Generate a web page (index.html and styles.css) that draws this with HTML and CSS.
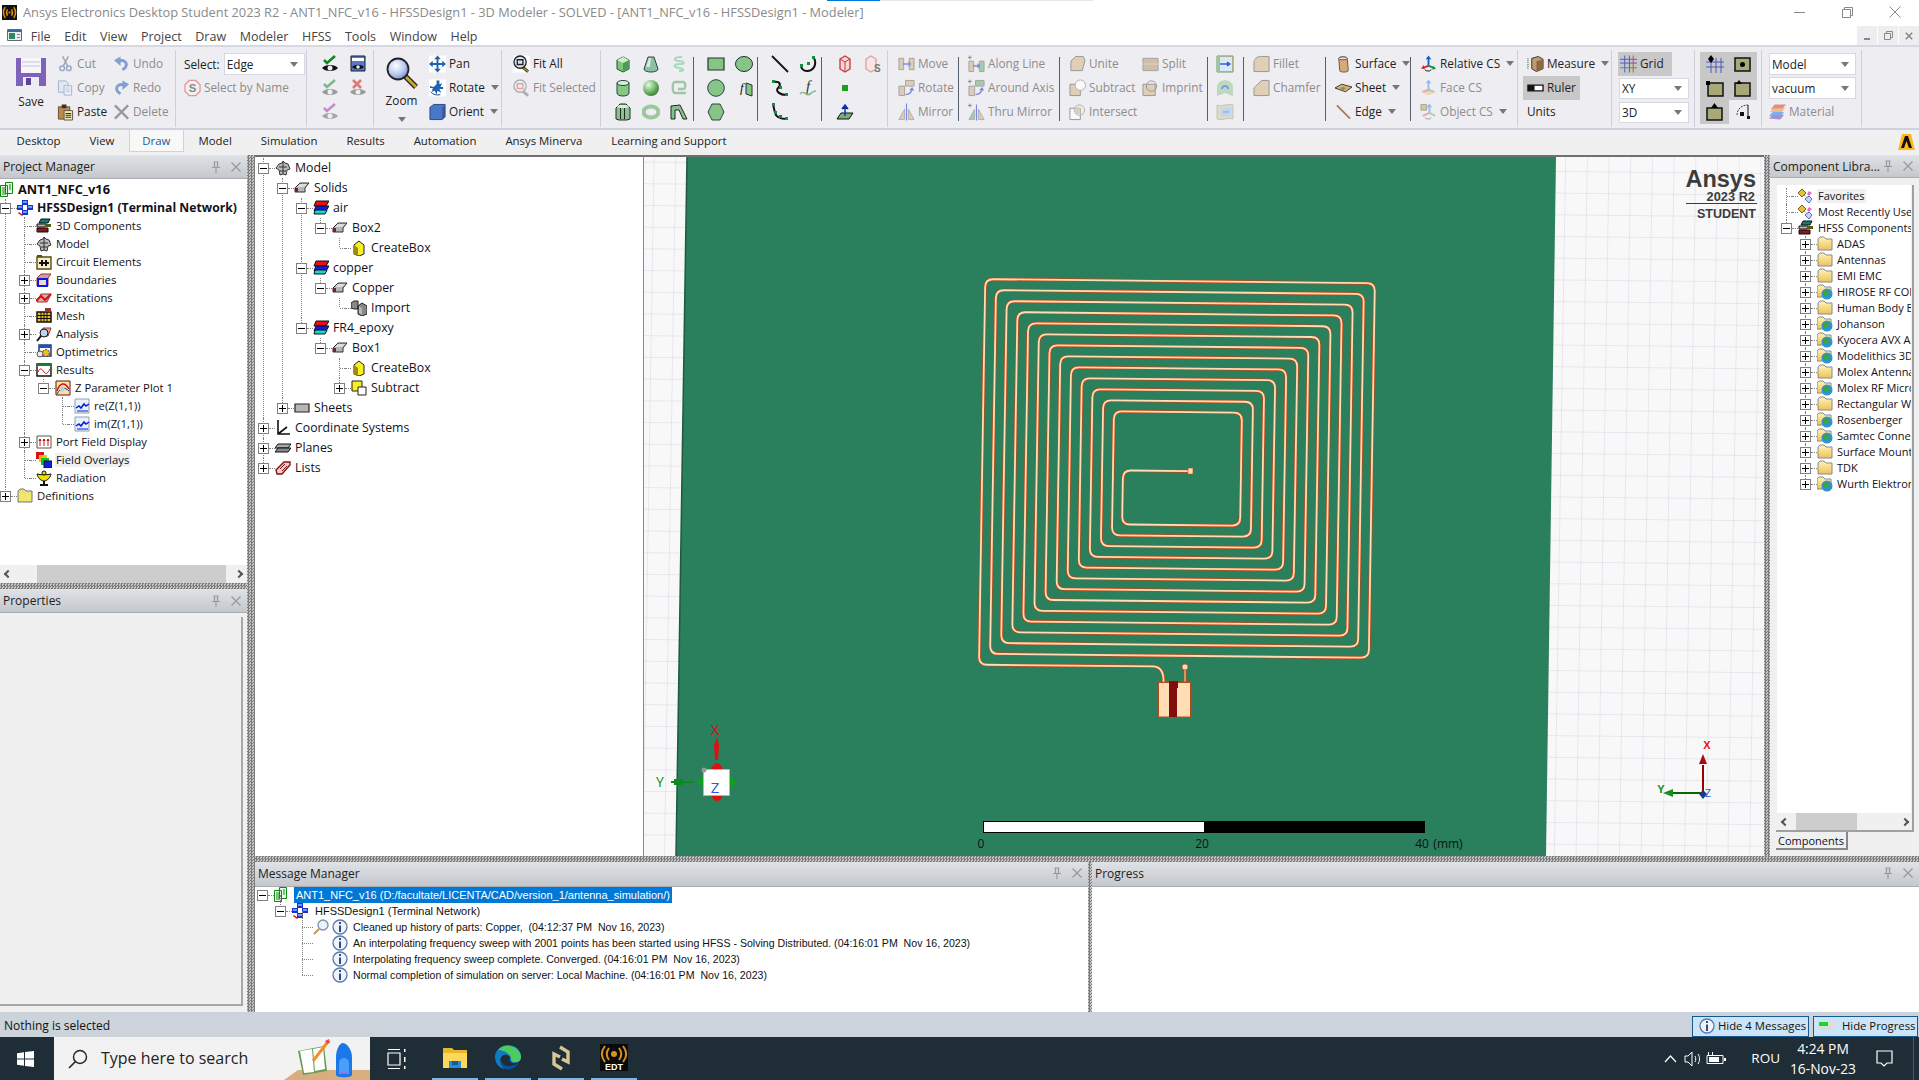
FILE: index.html
```html
<!DOCTYPE html>
<html lang="en">
<head>
<meta charset="utf-8">
<title>Ansys Electronics Desktop</title>
<link rel="stylesheet" href="styles.css">
</head>
<body>
<svg class="defs" width="0" height="0" aria-hidden="true">
<defs>
<radialGradient id="lens" cx=".4" cy=".35" r=".7"><stop offset="0" stop-color="#fff"/><stop offset=".6" stop-color="#b8c8ee"/><stop offset="1" stop-color="#6f86c8"/></radialGradient>
<radialGradient id="ball" cx=".35" cy=".3" r=".8"><stop offset="0" stop-color="#e8f6e4"/><stop offset=".5" stop-color="#7cc070"/><stop offset="1" stop-color="#2f6f2f"/></radialGradient>
<linearGradient id="fold" x1="0" y1="0" x2="0" y2="1"><stop offset="0" stop-color="#fff3b8"/><stop offset="1" stop-color="#eec25a"/></linearGradient>
<pattern id="grid" width="21.7" height="21.7" patternUnits="userSpaceOnUse" patternTransform="matrix(1 .0103 -.0162 1 4 3)"><path d="M21.7 0H0V21.7" fill="none" stroke="#d8d5e8" stroke-width="1"/></pattern>
<path id="coil" d="M7 1H-50q-8 0-8 8v38q0 8 8 8h102q8 0 8-8v-97q0-8-8-8h-112q-8 0-8 8v107.900q0 8 8 8h122.900q8 0 8-8v-118.800q0-8-8-8h-133.800q-8 0-8 8v129.700q0 8 8 8h144.700q8 0 8-8v-140.600q0-8-8-8h-155.600q-8 0-8 8v151.500q0 8 8 8h166.500q8 0 8-8v-162.400q0-8-8-8h-177.400q-8 0-8 8v173.300q0 8 8 8h188.300q8 0 8-8v-184.200q0-8-8-8h-199.200q-8 0-8 8v195.100q0 8 8 8h210.100q8 0 8-8v-206q0-8-8-8h-221q-8 0-8 8v216.900q0 8 8 8h231.900q8 0 8-8v-227.800q0-8-8-8h-242.800q-8 0-8 8v238.700q0 8 8 8h253.700q8 0 8-8v-249.600q0-8-8-8h-264.600q-8 0-8 8v260.500q0 8 8 8h275.500q8 0 8-8v-271.400q0-8-8-8h-286.400q-8 0-8 8v282.300q0 8 8 8h297.300q8 0 8-8v-293.200q0-8-8-8h-308.200q-8 0-8 8v304.100q0 8 8 8h319.100q8 0 8-8v-315q0-8-8-8h-330q-8 0-8 8v325.900q0 8 8 8h340.900q8 0 8-8v-336.800q0-8-8-8h-351.800q-8 0-8 8v347.700q0 8 8 8h362.700q8 0 8-8v-358.600q0-8-8-8h-373.600q-8 0-8 8v369.500q0 8 8 8h165.800q11 0 11 15.300"/>

<symbol id="save" viewBox="0 0 30 30"><path fill="#7f62ba" d="M0 1h30v28H0z"/><path fill="#f6f6fb" d="M5 1h20v15H5z"/><path stroke="#c4c4dc" d="M6 5h18M6 9h18"/><path fill="#ecedf2" d="M7 20h16v9H7z"/><path fill="#5c4494" d="M10 21h5v7h-5z"/></symbol>
<symbol id="cut" viewBox="0 0 18 18"><circle cx="5.5" cy="13.5" r="2.5" fill="none" stroke="#7d94bc" stroke-width="1.6"/><circle cx="12.5" cy="13.5" r="2.5" fill="none" stroke="#7d94bc" stroke-width="1.6"/><path stroke="#8e8e9c" stroke-width="1.6" d="M6.5 11.5 12 1M11.5 11.5 6 1"/></symbol>
<symbol id="copy" viewBox="0 0 18 18"><path fill="#dce6f4" stroke="#8aa0c4" d="M1.5 1.5h8l2 2v10h-10z"/><path fill="#f2f6fc" stroke="#8aa0c4" d="M7.5 6.5h8v10h-8z"/><path stroke="#a8b8d0" d="M9 9h5M9 11h5M9 13h5"/></symbol>
<symbol id="paste" viewBox="0 0 18 18"><path fill="#b88c4a" stroke="#6a4c20" d="M1.5 3.5h12v13h-12z"/><path fill="#f2e9a0" stroke="#555" d="M7.5 7.5h9v10h-9z"/><path fill="#333" d="M5 1h5v4H5zM9 10h6v1H9zM9 12h6v1H9zM9 14h6v1H9z"/></symbol>
<symbol id="undo" viewBox="0 0 18 18"><path fill="none" stroke="#5b86c6" stroke-width="3" d="M6 6c5-2 9 1 8 5-.5 2-2 3-4 4"/><path fill="#5b86c6" d="M8 1v10L1 5z"/></symbol>
<symbol id="redo" viewBox="0 0 18 18"><path fill="none" stroke="#5b86c6" stroke-width="3" d="M12 6c-5-2-9 1-8 5 .5 2 2 3 4 4"/><path fill="#5b86c6" d="M10 1v10l7-6z"/></symbol>
<symbol id="del" viewBox="0 0 18 18"><path stroke="#7c7c7c" stroke-width="2.4" d="M2 2l14 14M16 2 2 16"/></symbol>
<symbol id="sbn" viewBox="0 0 18 18"><path fill="#f3f3f3" stroke="#e27a7a" stroke-width="1.4" d="M5.5 1h7L17 5.5v7L12.500 17h-7L1 12.500v-7z"/><text x="9" y="13.500" text-anchor="middle" class="sv-b" font-size="12" fill="#666">S</text></symbol>
<symbol id="eye" viewBox="0 0 18 18"><path fill="#111" d="M1 13c3-4 13-4 16 0-3 4-13 4-16 0z"/><circle cx="9" cy="13" r="2.500" fill="#eee"/><path fill="none" stroke="#0a8a1e" stroke-width="2.600" d="M3 5l3 3 8-7"/></symbol>
<symbol id="eyew" viewBox="0 0 18 18"><path fill="#5b78c8" stroke="#123" d="M2 1h14v15H2z"/><path fill="#fff" d="M3 3h12v3H3z"/><path fill="#111" d="M3 12c3-3 9-3 12 0-3 3-9 3-12 0z"/><circle cx="9" cy="12" r="1.800" fill="#eee"/></symbol>
<symbol id="eyeg" viewBox="0 0 18 18"><path fill="#777" d="M1 13c3-4 13-4 16 0-3 4-13 4-16 0z"/><circle cx="9" cy="13" r="2.500" fill="#eee"/><path fill="none" stroke="#50a060" stroke-width="2.600" d="M3 5l3 3 8-7"/></symbol>
<symbol id="eyex" viewBox="0 0 18 18"><path fill="#777" d="M1 13c3-4 13-4 16 0-3 4-13 4-16 0z"/><circle cx="9" cy="13" r="2.500" fill="#eee"/><path stroke="#d84848" stroke-width="2.600" d="M4 1l8 8M12 1 4 9"/></symbol>
<symbol id="eyep" viewBox="0 0 18 18"><path fill="#888" d="M1 13c3-4 13-4 16 0-3 4-13 4-16 0z"/><circle cx="9" cy="13" r="2.500" fill="#eee"/><path fill="none" stroke="#b068b8" stroke-width="2.600" d="M3 5l3 3 8-7"/></symbol>
<symbol id="zoom" viewBox="0 0 32 32"><path stroke="#222" stroke-width="5.500" d="M19 19l11 11"/><path stroke="#c8a830" stroke-width="3" d="M20 20l10 10"/><circle cx="12" cy="12" r="10.500" fill="url(#lens)" stroke="#222" stroke-width="1.800"/></symbol>
<symbol id="pan" viewBox="0 0 18 18"><path fill="#fff" d="M0 0h18v18H0z"/><path fill="#1f62b0" d="M9 0l3.500 4H10v4h4V5.500L18 9l-4 3.500V10h-4v4h2.500L9 18l-3.500-4H8v-4H4v2.500L0 9l4-3.500V8h4V4H5.500z"/></symbol>
<symbol id="rot" viewBox="0 0 18 18"><path fill="#fff" d="M0 0h18v18H0z"/><path fill="#1f62b0" d="M8 1h3v4l3-1-2 4h3v2h-4l2 4-4-2-1 4-2-4-3 1 1-4H1V7l4 1 3-3z"/><path fill="none" stroke="#0c3d78" d="M2 13c2 3 6 4 10 3"/></symbol>
<symbol id="orient" viewBox="0 0 18 18"><path fill="#4a78c8" stroke="#26477e" d="M1 4l4-3h12v13l-3 3H1z"/><path fill="#345a9c" d="M14 4h3V2l-3 2v13l3-3V4z"/></symbol>
<symbol id="fit" viewBox="0 0 18 18"><path fill="#fff" d="M0 0h18v18H0z"/><path stroke="#222" stroke-width="3" d="M10 12l6 5"/><path stroke="#b89a30" stroke-width="1.500" d="M11 13l5 4"/><circle cx="7.500" cy="7" r="6.500" fill="#dde4f6" stroke="#222" stroke-width="1.400"/><path fill="none" stroke="#222" stroke-width="1.400" d="M4.500 4.500h6v5h-6z"/></symbol>
<symbol id="fits" viewBox="0 0 18 18"><path stroke="#999" stroke-width="3" d="M10 12l6 5"/><circle cx="7.500" cy="7" r="6.500" fill="#eee" stroke="#999" stroke-width="1.400"/><path fill="none" stroke="#e08a8a" stroke-width="1.400" d="M4.500 4.500h6v5h-6z"/></symbol>

<symbol id="box" viewBox="0 0 18 18"><path fill="#7cc67c" stroke="#1f4d2a" d="M3 5l6-3 6 3v9l-6 3-6-3z"/><path fill="#4f9a58" d="M9 8l6-3v9l-6 3z"/><path fill="#cfeeca" d="M3 5l6-3 6 3-6 3z"/></symbol>
<symbol id="cone" viewBox="0 0 18 18"><path fill="#8cc0a0" stroke="#344" d="M6 2h6l4 12c0 4-14 4-14 0z"/><path fill="#d8e8e0" d="M7 3h2L8 12H4z"/></symbol>
<symbol id="helix" viewBox="0 0 18 18"><path fill="none" stroke="#a6d8bc" stroke-width="2" d="M12 2C2 2 4 6 9 6s7 3 1 3-8 3-1 4 4 3 0 3"/></symbol>
<symbol id="cyl" viewBox="0 0 18 18"><path fill="#88c688" stroke="#244" d="M3 4v10c0 4 12 4 12 0V4z"/><ellipse cx="9" cy="4" rx="6" ry="2.500" fill="#d6f0d2" stroke="#244"/></symbol>
<symbol id="sphere" viewBox="0 0 18 18"><circle cx="9" cy="9" r="8" fill="url(#ball)"/></symbol>
<symbol id="spir" viewBox="0 0 18 18"><path fill="none" stroke="#9cc8a4" stroke-width="2.400" d="M16 14H5C2 14 2 3 5 3h8c3 0 3 7 0 7H8"/></symbol>
<symbol id="prism" viewBox="0 0 18 18"><path fill="#8cc090" stroke="#1e2a22" d="M6 1h6l4 4v11l-3 1H5l-3-1V5z"/><path fill="#1e2a22" d="M6 5v11h1V5zM10 5v11h1V5z"/><path fill="#d8eed8" d="M5 2h8l2 2-3 1H6L3 4z"/></symbol>
<symbol id="torus" viewBox="0 0 18 18"><ellipse cx="9" cy="9" rx="7.500" ry="5.500" fill="none" stroke="#9cc89c" stroke-width="4"/></symbol>
<symbol id="bond" viewBox="0 0 18 18"><path fill="#8cc090" stroke="#1e2a22" d="M1 16V3l9-1 7 14h-4L9 7H5v9z"/></symbol>
<symbol id="rect" viewBox="0 0 18 18"><path fill="#87c587" stroke="#233" stroke-width="1.200" d="M1 3h16v12H1z"/></symbol>
<symbol id="ell" viewBox="0 0 18 18"><ellipse cx="9" cy="9" rx="8.500" ry="7.500" fill="#87c587" stroke="#233" stroke-width="1"/></symbol>
<symbol id="circ" viewBox="0 0 18 18"><circle cx="9" cy="9" r="8.300" fill="#87c587" stroke="#244" stroke-width="1"/></symbol>
<symbol id="fsurf" viewBox="0 0 18 18"><path fill="#87c587" stroke="#233" d="M11 4l6 2v11l-6-2z"/><text x="5" y="13" class="sv-i" font-size="13" fill="#111">f</text></symbol>
<symbol id="hex" viewBox="0 0 18 18"><path fill="#87c587" stroke="#344" d="M5 1h8l4 8-4 8H5L1 9z"/></symbol>
<symbol id="line" viewBox="0 0 18 18"><path stroke="#111" stroke-width="1.800" d="M1 1l16 16"/></symbol>
<symbol id="arc" viewBox="0 0 18 18"><path fill="none" stroke="#111" stroke-width="2" d="M15 3c3 6 0 13-7 13-4 0-6-3-6-6"/><path fill="#1a8a40" d="M13 1h3v3h-3zM1 9h3v3H1zM8 7h3v3H8z"/></symbol>
<symbol id="spl" viewBox="0 0 18 18"><path fill="none" stroke="#111" stroke-width="2" d="M2 3c8-1 8 3 5 6s2 7 8 7"/><path fill="#1a8a40" d="M1 1h3v3H1zM14 14h3v3h-3zM8 7h3v3H8z"/></symbol>
<symbol id="fcurve" viewBox="0 0 18 18"><text x="7" y="12" class="sv-i" font-size="15" fill="#333">f</text><path fill="none" stroke="#86b48e" stroke-width="1.600" d="M1 15c4-5 6 3 10 0s4-3 6-3"/></symbol>
<symbol id="poly" viewBox="0 0 18 18"><path fill="none" stroke="#111" stroke-width="2" d="M2 1l2 9c1 4 5 6 12 6"/><path fill="#1a8a40" d="M1 0h3v3H1zM3 8h3v3H3zM8 12h3v3H8zM14 14h3v3h-3z"/></symbol>
<symbol id="wbox" viewBox="0 0 18 18"><path fill="#f4d8d8" stroke="#c83838" stroke-width="1.300" d="M4 4l5-3 5 3v10l-5 3-5-3z"/><path fill="none" stroke="#c83838" d="M4 4l5 3 5-3M9 7v10"/></symbol>
<symbol id="wboxs" viewBox="0 0 18 18"><path fill="#f8e6e6" stroke="#dca0a0" stroke-width="1.300" d="M2 4l5-3 5 3v10l-5 3-5-3z"/><text x="10" y="17" class="sv-b" font-size="10" fill="#777">S</text></symbol>
<symbol id="point" viewBox="0 0 18 18"><path fill="#1aa01e" d="M6 6h6v6H6z"/></symbol>
<symbol id="plane" viewBox="0 0 18 18"><path fill="#78b078" stroke="#111" d="M1 16l4-6h12l-4 6z"/><path stroke="#1030d0" stroke-width="1.500" d="M9 13V3M6 6l3-4 3 4"/></symbol>
<symbol id="move" viewBox="0 0 18 18"><path fill="#d8c0a0" stroke="#888" d="M1 3h5v12H1zM12 3h5v12h-5z"/><path stroke="#5068e0" stroke-width="1.500" d="M5 9h6"/><path fill="#5068e0" d="M11 6l3 3-3 3z"/></symbol>
<symbol id="rotm" viewBox="0 0 18 18"><path fill="#d8c0a0" stroke="#888" d="M1 7h6v10H1zM8 1h9v6H8z"/><path fill="none" stroke="#5068e0" stroke-width="1.500" d="M8 16c4 0 6-2 7-6"/><path fill="#5068e0" d="M12 11l3-3 2 4z"/></symbol>
<symbol id="mirror" viewBox="0 0 18 18"><path fill="#d8c0a0" stroke="#999" d="M1 17l6-11v11zM17 17l-6-11v11z"/><path stroke="#5068e0" stroke-width="1.200" d="M9 0v18"/></symbol>
<symbol id="along" viewBox="0 0 18 18"><path stroke="#666" d="M2 0v4M0 2h4"/><path fill="#d8c0a0" stroke="#888" d="M1 6h5v11H1z"/><path fill="#8cc090" stroke="#888" d="M12 6h5v11h-5z"/><path stroke="#5068e0" stroke-width="1.500" d="M5 11h6"/><path fill="#5068e0" d="M10 8l3 3-3 3z"/></symbol>
<symbol id="around" viewBox="0 0 18 18"><path stroke="#666" d="M2 0v4M0 2h4"/><path fill="#d8c0a0" stroke="#888" d="M1 7h6v10H1z"/><path fill="#8cc090" stroke="#888" d="M8 1h9v6H8z"/><path fill="none" stroke="#5068e0" stroke-width="1.500" d="M8 16c4 0 6-2 7-6"/><path fill="#5068e0" d="M12 11l3-3 2 4z"/></symbol>
<symbol id="thru" viewBox="0 0 18 18"><path stroke="#666" d="M2 0v4M0 2h4"/><path fill="#8cc090" stroke="#999" d="M1 17l6-11v11z"/><path fill="#d8c0a0" stroke="#999" d="M17 17l-6-11v11z"/><path stroke="#5068e0" stroke-width="1.200" d="M9 1v17"/></symbol>
<symbol id="unite" viewBox="0 0 18 18"><path fill="#dcc4a4" stroke="#777" d="M2 6l5-5h8l2 4-3 11H2z"/></symbol>
<symbol id="subt" viewBox="0 0 18 18"><path fill="#dcc4a4" stroke="#777" d="M1 5h11v12H1z"/><circle cx="12" cy="6" r="5.500" fill="#fff" stroke="#999"/></symbol>
<symbol id="inter" viewBox="0 0 18 18"><path fill="#fff" stroke="#777" d="M1 5h11v12H1z"/><circle cx="11" cy="7" r="5.500" fill="none" stroke="#999"/><path fill="#dcc4a4" d="M6 5h6v6H7z"/></symbol>
<symbol id="split" viewBox="0 0 18 18"><path fill="#c8ae90" stroke="#888" d="M1 3h16v13H1z"/><path stroke="#eee" stroke-dasharray="1 1" d="M0 9h18"/></symbol>
<symbol id="impr" viewBox="0 0 18 18"><path fill="#dcc4a4" stroke="#777" d="M1 5h13v12H1z"/><circle cx="10" cy="7" r="5.500" fill="none" stroke="#777"/></symbol>
<symbol id="wrap" viewBox="0 0 18 18"><path fill="#eec8a0" stroke="#6a9a6a" d="M1 1h16v16H1z"/><path fill="#d8e8f8" d="M2 2h14v14H2z"/><path stroke="#3a60d8" stroke-width="1.400" d="M4 9h9M11 7l3 2-3 2"/><path fill="#98c898" d="M1 1h3v16H1z"/></symbol>
<symbol id="wrap2" viewBox="0 0 18 18"><path fill="#a8d0a8" d="M1 8c0-9 16-9 16 0v9l-8-3-8 3z"/><path fill="none" stroke="#3a60d8" stroke-width="1.400" d="M6 10c0-4 6-4 6 0"/></symbol>
<symbol id="wrap3" viewBox="0 0 18 18"><path fill="#dcd0b8" stroke="#a0c0a0" d="M1 2c5 2 11-2 16 0v14c-5-2-11 2-16 0z"/><path fill="#a8d0f0" d="M5 5h10v8H5z"/><path stroke="#6078d8" d="M7 9h6"/></symbol>
<symbol id="fillet" viewBox="0 0 18 18"><path fill="#dcc4a4" stroke="#777" d="M1 17V8c0-4 3-7 7-7h9v16z"/></symbol>
<symbol id="chamf" viewBox="0 0 18 18"><path fill="#dcc4a4" stroke="#777" d="M1 17V9l8-8h8v16z"/></symbol>
<symbol id="surf" viewBox="0 0 18 18"><path fill="#d8a878" stroke="#555" d="M4 3c0-2 9-2 9 0l1 13c0 2-9 2-9 0z"/><ellipse cx="8.500" cy="3" rx="4.500" ry="1.600" fill="#f0dcc4" stroke="#555"/></symbol>
<symbol id="sheet" viewBox="0 0 18 18"><path fill="#d8b870" stroke="#333" d="M0 9l7-4 11 3-7 5z"/><path fill="#998050" d="M5 9l3-1 4 1-3 2z"/></symbol>
<symbol id="edge" viewBox="0 0 18 18"><path stroke="#a87a50" stroke-width="1.800" d="M2 2l14 14"/></symbol>
<symbol id="cs" viewBox="0 0 18 18"><path stroke="#1060d0" stroke-width="2" d="M9 11V2"/><path fill="#1060d0" d="M9 0l3 4H6z"/><path stroke="#e02020" stroke-width="2" d="M9 11l-6 2"/><path fill="#e02020" d="M1 14l3-4 1 4z"/><path stroke="#109030" stroke-width="2" d="M9 11l6 2"/><path fill="#109030" d="M17 14l-4 1 1-4z"/><path fill="none" stroke="#111" d="M5 15c2 2 5 2 7 0"/></symbol>
<symbol id="fcs" viewBox="0 0 18 18"><path fill="#f0d0b0" d="M1 13l8-4 8 4-8 4z"/><path stroke="#80a8e8" stroke-width="2" d="M9 11V2"/><path fill="#80a8e8" d="M9 0l3 4H6z"/><path stroke="#e89090" stroke-width="2" d="M9 11l-6 2"/><path stroke="#90c898" stroke-width="2" d="M9 11l6 2"/></symbol>
<symbol id="ocs" viewBox="0 0 18 18"><path fill="#c8c070" stroke="#888" d="M1 1h6v6H1z"/><path stroke="#80a8e8" stroke-width="2" d="M10 10V2"/><path fill="#80a8e8" d="M10 0l3 4H7z"/><path stroke="#e89090" stroke-width="2" d="M10 10l-7 3"/><path stroke="#90c898" stroke-width="2" d="M10 10l6 3"/><path fill="none" stroke="#888" d="M5 15c2 2 5 2 7 0"/></symbol>
<symbol id="meas" viewBox="0 0 18 18"><path fill="#c09a70" stroke="#333" d="M5 3l7-2 5 3v10l-7 3-5-3z"/><path fill="#8a6840" d="M10 6l7-2v10l-7 3z"/><path stroke="#333" stroke-dasharray="1 1" d="M1 3v11"/></symbol>
<symbol id="ruler" viewBox="0 0 18 18"><path fill="#fff" stroke="#111" stroke-width="1.400" d="M1 6h16v6H1z"/><path fill="#111" d="M1 6h7v6H1z"/></symbol>
<symbol id="gridi" viewBox="0 0 18 18"><path stroke="#4a58c0" d="M0 4h18M0 8h18M5 0v18M10 0v18"/><path stroke="#e04040" d="M14 0v18"/><path stroke="#30a040" d="M0 13h18"/></symbol>
<symbol id="s1" viewBox="0 0 18 18"><path stroke="#4a58c0" d="M0 7h18M0 12h18M5 3v15M10 3v15M15 3v15"/><path fill="#000" d="M2 4l3-4 3 4-3 4z"/></symbol>
<symbol id="s2" viewBox="0 0 18 18"><path fill="#a8a878" stroke="#111" stroke-width="1.500" d="M1 3h15v13H1z"/><circle cx="8.500" cy="9.500" r="2.500" fill="#000"/></symbol>
<symbol id="s3" viewBox="0 0 18 18"><path fill="#a8a878" stroke="#111" stroke-width="1.500" d="M2 4h15v13H2z"/><path fill="#000" d="M0 2h4v4H0z"/></symbol>
<symbol id="s4" viewBox="0 0 18 18"><path fill="#a8a878" stroke="#111" stroke-width="1.500" d="M1 4h15v13H1z"/><path fill="#000" d="M2 5l3-4 3 4z"/></symbol>
<symbol id="s5" viewBox="0 0 18 18"><path fill="#a8a878" stroke="#111" stroke-width="1.500" d="M1 5h15v12H1z"/><path fill="#000" d="M5 5l3.500-5L12 5z"/></symbol>
<symbol id="s6" viewBox="0 0 18 18"><path fill="none" stroke="#445" stroke-dasharray="2 1" d="M3 12C3 6 8 2 14 2"/><path fill="#111" d="M6 9h4v4H6zM13 13h3v3h-3z"/><path fill="none" stroke="#111" d="M14 2v11"/></symbol>
<symbol id="matl" viewBox="0 0 18 18"><path fill="#e86860" d="M2 6l4-5h12l-4 5z"/><path fill="#e8b060" d="M1 9l4-4h12l-4 5z"/><path fill="#50a0e8" d="M0 13l4-4h12l-4 5z"/><path fill="#9070d0" d="M0 16l4-4h12l-4 5z"/></symbol>

<symbol id="t-proj" viewBox="0 0 16 16"><path fill="#e8f8e8" stroke="#0c8a0c" d="M5.500.5h7v11h-7zM.5 3.500h7v11h-7z"/><path stroke="#0c8a0c" d="M2 6h4M2 8h4M2 10h4M2 12h4M9 3h2M9 5h2M9 7h2"/></symbol>
<symbol id="t-hfss" viewBox="0 0 16 16"><path fill="#2030d0" d="M5 0h6v5H5zM0 5h6v5H0zM10 5h6v5h-6zM5 10h6v5H5z"/><path fill="#60a0ff" d="M6 1h4v2H6zM1 6h4v2H1zM11 6h4v2h-4zM6 11h4v2H6z"/><path fill="#d01010" d="M2 12l4 3-1 1-4-3z"/></symbol>
<symbol id="t-3d" viewBox="0 0 16 16"><path fill="#187878" stroke="#111" d="M5 1h9l-2 4H3z"/><path fill="#b8b8b8" stroke="#111" d="M1 6h9l-1 3h-8z"/><path fill="#8a1818" stroke="#111" d="M1 10h11v4H1z"/><path fill="#585818" d="M9 6h6v3H9z"/></symbol>
<symbol id="t-model" viewBox="0 0 16 16"><path fill="#bbb" stroke="#333" d="M4 4l3-1 1-2 2 2 3 1 2 5-3 1-1 5-3-1-3 1-1-5-3-2z"/><path stroke="#333" d="M8 2v12M4 7h8M5 11h6"/></symbol>
<symbol id="t-circ" viewBox="0 0 16 16"><path fill="#f4eec8" stroke="#5a4a10" stroke-width="1.400" d="M1 3h14v12H1z"/><path fill="#5a4a10" d="M1 1h5v2H1z"/><path stroke="#111" stroke-width="2" d="M6 6v6M10 6v6M3 9h10"/></symbol>
<symbol id="t-bnd" viewBox="0 0 16 16"><path fill="#c8a0a0" stroke="#933" d="M1 6l4-4h10l-3 4v8H1z"/><path fill="#f0d8d8" stroke="#1018e0" stroke-width="2" d="M2 7h9v7H2z"/></symbol>
<symbol id="t-exc" viewBox="0 0 16 16"><path fill="#d8b0b0" stroke="#933" d="M1 12l4-8h10l-4 8z"/><path fill="none" stroke="#e01010" stroke-width="2.200" d="M0 11l5-5 4 4 6-6"/></symbol>
<symbol id="t-mesh" viewBox="0 0 16 16"><path fill="#e8c020" stroke="#111" stroke-width="1.500" d="M1 4h14v10H1z"/><path stroke="#111" d="M1 7.500h14M1 10.500h14M5 4v10M8 4v10M11 4v10"/><path fill="#933" d="M9 0h6v4H9z"/></symbol>
<symbol id="t-ana" viewBox="0 0 16 16"><path fill="#d8b0b0" stroke="#933" d="M4 10l3-8h8l-3 8z"/><path stroke="#111" stroke-width="2" d="M5 10l-4 5"/><circle cx="8" cy="7" r="4" fill="#b8d8f0" stroke="#111"/></symbol>
<symbol id="t-opt" viewBox="0 0 16 16"><path fill="#fff" stroke="#203878" stroke-width="1.500" d="M3 1h12v11H3z"/><path fill="#2050c0" d="M3 1h12v3H3z"/><circle cx="10" cy="9" r="3.500" fill="#e8c020" stroke="#333" stroke-dasharray="2 1"/><circle cx="4" cy="10" r="3" fill="#e8e8e8" stroke="#555"/></symbol>
<symbol id="t-res" viewBox="0 0 16 16"><path fill="#fff" stroke="#111" stroke-width="1.400" d="M1 2h14v12H1z"/><path fill="#168038" d="M1 2h14v2H1z"/><path fill="none" stroke="#d81010" d="M2 10c2-5 4-3 6 0s4 1 6-3"/></symbol>
<symbol id="t-plot" viewBox="0 0 16 16"><path fill="#f4e4a0" stroke="#6a1010" d="M1 1h14v14H1z"/><path fill="none" stroke="#d81010" stroke-width="1.400" d="M2 11C5 2 10 2 14 9"/><path fill="none" stroke="#1030c8" d="M2 14c4-7 8-7 12-3"/><circle cx="7" cy="9" r="2.500" fill="#bcd"/></symbol>
<symbol id="t-trace" viewBox="0 0 16 16"><path fill="#e8f0f8" stroke="#8ca0b8" d="M1 1h14v14H1z"/><path fill="none" stroke="#0018e8" stroke-width="1.500" d="M2 10l3-2 2 2 3-4 2 2 3-2"/><path stroke="#0018e8" d="M3 13h11"/></symbol>
<symbol id="t-port" viewBox="0 0 16 16"><path fill="#fff" stroke="#555" d="M1 2h14v12H1z"/><path stroke="#d01010" d="M4 12V5M8 12V5M12 12V5M3 7l1-2 1 2M7 7l1-2 1 2M11 7l1-2 1 2"/></symbol>
<symbol id="t-over" viewBox="0 0 16 16"><path fill="#e01010" d="M0 0h8v7H0z"/><path fill="#f0c010" d="M3 3h8v7H3z"/><path fill="#10c030" d="M5 6h8v7H5z"/><path fill="#1020e0" stroke="#111" d="M8 9h8v7H8z"/></symbol>
<symbol id="t-rad" viewBox="0 0 16 16"><path fill="#f0e000" stroke="#111" d="M1 4c3 1 11 1 14 0-1 5-5 7-7 7s-6-2-7-7z"/><circle cx="8" cy="3" r="2" fill="#f0e000" stroke="#111"/><path fill="#111" d="M7 11h2v3H7zM4 14h8v2H4z"/></symbol>
<symbol id="t-fold" viewBox="0 0 16 16"><path fill="#e8e080" stroke="#777" d="M1 3l2-2h4l2 2h6v11H1z"/><path fill="#f0e868" d="M2 5h12v8H2z"/></symbol>
<symbol id="t-solid" viewBox="0 0 16 16"><path fill="#b8b4b4" stroke="#333" d="M1 8l5-5h9l-4 5v4H1z"/><path fill="#7a2020" d="M1 8h3v4H1z"/><path fill="#ddd" d="M6 4h7l-3 3H3z"/></symbol>
<symbol id="t-mat" viewBox="0 0 16 16"><path fill="#e81010" stroke="#111" d="M3 1h13l-3 5H1z"/><path fill="#1818e8" stroke="#111" d="M3 6h13l-3 5H1z"/><path fill="#10d8d8" stroke="#111" d="M2 10h12l-2 4H1z"/></symbol>
<symbol id="t-cbox" viewBox="0 0 16 16"><path fill="#f8f020" stroke="#222" d="M3 5l5-4 5 4v9l-5 2-5-2z"/><path fill="#a08a10" d="M3 5v9l4 2V8z"/></symbol>
<symbol id="t-imp" viewBox="0 0 16 16"><path fill="#888" stroke="#222" d="M0 3l3-2h4v8H3l-3-1zM7 6l4-3 5 3v8l-5 2-4-2z"/><path fill="#b8b8b8" d="M8 6l3 2v7l-3-2z"/></symbol>
<symbol id="t-sub" viewBox="0 0 16 16"><path fill="#f8f020" stroke="#222" d="M1 1h10v10H1z"/><path fill="#fff" stroke="#222" d="M7 7h8v8H7z"/></symbol>
<symbol id="t-sheet" viewBox="0 0 16 16"><path fill="#b8b4b4" stroke="#222" stroke-width="1.200" d="M1 4h14v8H1z"/></symbol>
<symbol id="t-cs" viewBox="0 0 16 16"><path fill="none" stroke="#111" stroke-width="1.600" d="M3 0v14h12M3 14l9-7"/></symbol>
<symbol id="t-planes" viewBox="0 0 16 16"><path fill="#aaa" stroke="#111" d="M3 4h13l-3 4H0z"/><path fill="#888" stroke="#111" d="M3 8h13l-3 4H0z"/></symbol>
<symbol id="t-lists" viewBox="0 0 16 16"><path fill="#e8d0d0" stroke="#8a1010" stroke-width="1.400" d="M1 10l8-8h6v3l-8 9H2z"/><path stroke="#8a1010" d="M5 9l5-5M7 11l5-5"/></symbol>
<symbol id="t-fav" viewBox="0 0 16 16"><path fill="#e8c040" stroke="#806010" d="M0 5l4-4 4 4-4 4z"/><path stroke="#666" stroke-dasharray="1 1" d="M6 7l4 3"/><path fill="#c8d8f8" stroke="#5068c8" d="M7 11l4-3 3 3-3 4z"/><path fill="#d870c8" d="M11 3l3 2-3 3-2-2z"/></symbol>
<symbol id="t-yfold" viewBox="0 0 16 16"><path fill="url(#fold)" stroke="#888" d="M1 3l2-2h4l2 2h6v11H1z"/></symbol>
<symbol id="t-gfold" viewBox="0 0 16 16"><path fill="url(#fold)" stroke="#888" d="M0 3l2-2h4l2 2h6v10H0z"/><circle cx="10" cy="10" r="5.500" fill="#3090d8"/><path fill="#38a838" d="M7 7l3-1 2 2-1 3-3 2-2-3zM13 11l2-1-1 3z"/></symbol>
<symbol id="t-info" viewBox="0 0 16 16"><circle cx="8" cy="8" r="7" fill="#f0f4fa" stroke="#5a78a8" stroke-width="1.300"/><path fill="#2a4a88" d="M7 3h2v2H7zM7 6.500h2V13H7z"/></symbol>
<symbol id="t-find" viewBox="0 0 16 16"><path stroke="#c89050" stroke-width="2" d="M1 15l5-5"/><circle cx="10" cy="6" r="5" fill="#eaf2fc" stroke="#8090a8" stroke-width="1.300"/></symbol>
<symbol id="pin" viewBox="0 0 10 12"><path fill="none" stroke="#999" stroke-width="1.200" d="M2.500 1h5M3.500 1v5M6.500 1v5M1 6.500h8M5 7v5"/></symbol>
<symbol id="x" viewBox="0 0 10 10"><path stroke="#999" stroke-width="1.300" d="M.5.500l9 9M9.500.500l-9 9"/></symbol>
<symbol id="winx" viewBox="0 0 12 12"><path stroke="#888" d="M.5.500l11 11M11.500.500l-11 11"/></symbol>
</defs>
</svg>

<div class="titlebar">
  <svg class="appicon" viewBox="0 0 14 14"><path fill="#111" d="M0 0h14v14H0z"/><g fill="none" stroke="#e09010" stroke-width="1.400"><path d="M3 2c-2 3-2 7 0 10M11 2c2 3 2 7 0 10"/><path d="M5 4c-1 2-1 4 0 6M9 4c1 2 1 4 0 6"/></g><circle cx="7" cy="7" r="1" fill="#e09010"/></svg>
  <span class="title-text">Ansys Electronics Desktop Student 2023 R2 - ANT1_NFC_v16 - HFSSDesign1 - 3D Modeler - SOLVED - [ANT1_NFC_v16 - HFSSDesign1 - Modeler]</span>
  <div class="winbtns">
    <span class="winbtn"><i class="wmin"></i></span>
    <span class="winbtn"><svg width="11" height="11" viewBox="0 0 11 11"><path fill="none" stroke="#888" d="M.5 2.500h8v8h-8zM2.500 2.500v-2h8v8h-2"/></svg></span>
    <span class="winbtn"><svg width="12" height="12"><use href="#winx"/></svg></span>
  </div>
</div>

<div class="menubar">
  <svg class="menuicon" viewBox="0 0 15 12"><path fill="#e8edf2" stroke="#667" d="M.5.500h14v11H.5z"/><path fill="#3a6a98" d="M1 1h13v2H1z"/><path fill="#2a8a5a" d="M2 4h6v6H2z"/><path fill="#888" d="M10 5h3v1h-3zM10 8h3v1h-3z"/></svg>
  <span class="menu">File</span><span class="menu">Edit</span><span class="menu">View</span><span class="menu">Project</span><span class="menu">Draw</span><span class="menu">Modeler</span><span class="menu">HFSS</span><span class="menu">Tools</span><span class="menu">Window</span><span class="menu">Help</span>
  <div class="mdibtns">
    <span class="mdibtn"><i class="mmin"></i></span>
    <span class="mdibtn"><svg width="9" height="9" viewBox="0 0 9 9"><path fill="none" stroke="#888" d="M.5 2.500h6v6h-6zM2.500 2.500v-2h6v6h-2"/></svg></span>
    <span class="mdibtn"><svg width="8" height="8" viewBox="0 0 10 10"><path stroke="#888" stroke-width="2" d="M1 1l8 8M9 1 1 9"/></svg></span>
  </div>
</div>

<div class="ribbon">
  <div class="group g1">
    <div class="bigtool"><svg class="ic30"><use href="#save"/></svg><span>Save</span></div>
    <span class="tool off"><svg class="ic"><use href="#cut"/></svg><span>Cut</span></span>
    <span class="tool off"><svg class="ic"><use href="#copy"/></svg><span>Copy</span></span>
    <span class="tool"><svg class="ic"><use href="#paste"/></svg><span>Paste</span></span>
    <span class="tool off"><svg class="ic"><use href="#undo"/></svg><span>Undo</span></span>
    <span class="tool off"><svg class="ic"><use href="#redo"/></svg><span>Redo</span></span>
    <span class="tool off"><svg class="ic"><use href="#del"/></svg><span>Delete</span></span>
  </div><i class="sep"></i>
  <div class="group g2">
    <div class="selrow"><span>Select:</span><span class="combo selcombo">Edge</span></div>
    <span class="tool off"><svg class="ic"><use href="#sbn"/></svg><span>Select by Name</span></span>
  </div><i class="sep"></i>
  <div class="group g3 icons">
    <svg class="ic18"><use href="#eye"/></svg><svg class="ic18 dim"><use href="#eyeg"/></svg><svg class="ic18 dim"><use href="#eyep"/></svg>
    <svg class="ic18"><use href="#eyew"/></svg><svg class="ic18 dim"><use href="#eyex"/></svg>
  </div><i class="sep"></i>
  <div class="group g4">
    <div class="bigtool zoomtool"><svg class="ic32"><use href="#zoom"/></svg><span>Zoom</span><i class="caret"></i></div>
    <span class="tool"><svg class="ic"><use href="#pan"/></svg><span>Pan</span></span>
    <span class="tool"><svg class="ic"><use href="#rot"/></svg><span>Rotate</span><i class="caret"></i></span>
    <span class="tool"><svg class="ic"><use href="#orient"/></svg><span>Orient</span><i class="caret"></i></span>
  </div><i class="sep"></i>
  <div class="group g5">
    <span class="tool"><svg class="ic"><use href="#fit"/></svg><span>Fit All</span></span>
    <span class="tool off"><svg class="ic"><use href="#fits"/></svg><span>Fit Selected</span></span>
  </div><i class="sep"></i>
  <div class="group g6 icons">
    <svg class="ic18"><use href="#box"/></svg><svg class="ic18"><use href="#cyl"/></svg><svg class="ic18"><use href="#prism"/></svg>
    <svg class="ic18"><use href="#cone"/></svg><svg class="ic18"><use href="#sphere"/></svg><svg class="ic18"><use href="#torus"/></svg>
    <svg class="ic18"><use href="#helix"/></svg><svg class="ic18"><use href="#spir"/></svg><svg class="ic18"><use href="#bond"/></svg>
  </div><i class="sep d"></i>
  <div class="group g7 icons">
    <svg class="ic18"><use href="#rect"/></svg><svg class="ic18"><use href="#circ"/></svg><svg class="ic18"><use href="#hex"/></svg>
    <svg class="ic18"><use href="#ell"/></svg><svg class="ic18"><use href="#fsurf"/></svg>
  </div><i class="sep d"></i>
  <div class="group g8 icons">
    <svg class="ic18"><use href="#line"/></svg><svg class="ic18"><use href="#spl"/></svg><svg class="ic18"><use href="#poly"/></svg>
    <svg class="ic18"><use href="#arc"/></svg><svg class="ic18"><use href="#fcurve"/></svg>
  </div><i class="sep d"></i>
  <div class="group g9 icons">
    <svg class="ic18"><use href="#wbox"/></svg><svg class="ic18"><use href="#point"/></svg><svg class="ic18"><use href="#plane"/></svg>
    <svg class="ic18"><use href="#wboxs"/></svg>
  </div><i class="sep"></i>
  <div class="group g10">
    <span class="tool off"><svg class="ic"><use href="#move"/></svg><span>Move</span></span>
    <span class="tool off"><svg class="ic"><use href="#rotm"/></svg><span>Rotate</span></span>
    <span class="tool off"><svg class="ic"><use href="#mirror"/></svg><span>Mirror</span></span>
  </div><i class="sep d"></i>
  <div class="group g11">
    <span class="tool off"><svg class="ic"><use href="#along"/></svg><span>Along Line</span></span>
    <span class="tool off"><svg class="ic"><use href="#around"/></svg><span>Around Axis</span></span>
    <span class="tool off"><svg class="ic"><use href="#thru"/></svg><span>Thru Mirror</span></span>
  </div><i class="sep d"></i>
  <div class="group g12">
    <span class="tool off"><svg class="ic"><use href="#unite"/></svg><span>Unite</span></span>
    <span class="tool off"><svg class="ic"><use href="#subt"/></svg><span>Subtract</span></span>
    <span class="tool off"><svg class="ic"><use href="#inter"/></svg><span>Intersect</span></span>
    <span class="tool off"><svg class="ic"><use href="#split"/></svg><span>Split</span></span>
    <span class="tool off"><svg class="ic"><use href="#impr"/></svg><span>Imprint</span></span>
  </div><i class="sep d"></i>
  <div class="group g13 icons">
    <svg class="ic18"><use href="#wrap"/></svg><svg class="ic18 dim"><use href="#wrap2"/></svg><svg class="ic18 dim"><use href="#wrap3"/></svg>
  </div><i class="sep d"></i>
  <div class="group g14">
    <span class="tool off"><svg class="ic"><use href="#fillet"/></svg><span>Fillet</span></span>
    <span class="tool off"><svg class="ic"><use href="#chamf"/></svg><span>Chamfer</span></span>
  </div><i class="sep d"></i>
  <div class="group g15">
    <span class="tool"><svg class="ic"><use href="#surf"/></svg><span>Surface</span><i class="caret"></i></span>
    <span class="tool"><svg class="ic"><use href="#sheet"/></svg><span>Sheet</span><i class="caret"></i></span>
    <span class="tool"><svg class="ic"><use href="#edge"/></svg><span>Edge</span><i class="caret"></i></span>
  </div><i class="sep d"></i>
  <div class="group g16">
    <span class="tool"><svg class="ic"><use href="#cs"/></svg><span>Relative CS</span><i class="caret"></i></span>
    <span class="tool off"><svg class="ic"><use href="#fcs"/></svg><span>Face CS</span></span>
    <span class="tool off"><svg class="ic"><use href="#ocs"/></svg><span>Object CS</span><i class="caret"></i></span>
  </div><i class="sep"></i>
  <div class="group g17">
    <span class="tool pad"><svg class="ic"><use href="#meas"/></svg><span>Measure</span><i class="caret"></i></span>
    <span class="tool pad hl"><svg class="ic"><use href="#ruler"/></svg><span>Ruler</span></span>
    <span class="tool pad"><span class="units">Units</span></span>
  </div><i class="sep"></i>
  <div class="group g18">
    <span class="tool pad2 hl"><svg class="ic"><use href="#gridi"/></svg><span>Grid</span></span>
    <span class="combo xycombo">XY</span>
    <span class="combo xycombo">3D</span>
  </div><i class="sep"></i>
  <div class="group g19">
    <span class="cell hl"><svg class="ic18"><use href="#s1"/></svg></span><span class="cell hl"><svg class="ic18"><use href="#s3"/></svg></span><span class="cell hl"><svg class="ic18"><use href="#s5"/></svg></span>
    <span class="cell hl"><svg class="ic18"><use href="#s2"/></svg></span><span class="cell hl"><svg class="ic18"><use href="#s4"/></svg></span><span class="cell"><svg class="ic18"><use href="#s6"/></svg></span>
  </div><i class="sep"></i>
  <div class="group g20">
    <span class="combo matcombo">Model</span>
    <span class="combo matcombo">vacuum</span>
    <span class="tool off"><svg class="ic"><use href="#matl"/></svg><span>Material</span></span>
  </div><i class="sep"></i>
</div>

<div class="tabs">
  <span class="tab">Desktop</span><span class="tab">View</span><span class="tab active">Draw</span><span class="tab">Model</span><span class="tab">Simulation</span><span class="tab">Results</span><span class="tab">Automation</span><span class="tab">Ansys Minerva</span><span class="tab">Learning and Support</span>
  <svg class="ansysmark" viewBox="0 0 17 16"><path fill="#ffb71b" d="M4 0h9l4 16H0z"/><path fill="#111" d="M7 2h3l4 12h-3L8.500 7 6 14H3z"/></svg>
</div>

<div class="workspace">
  <div class="leftcol">
    <div class="dock pm">
      <div class="dockhead"><span>Project Manager</span><svg class="pin"><use href="#pin"/></svg><svg class="close"><use href="#x"/></svg></div>
      <div class="pmbody">
        <div class="rootrow"><svg class="ti"><use href="#t-proj"/></svg><b>ANT1_NFC_v16</b></div>
        <ul class="tree r18 rootlist">
          <li><div class="row"><i class="exp m"></i><i class="conn"></i><svg class="ti"><use href="#t-hfss"/></svg><b>HFSSDesign1 (Terminal Network)</b></div>
            <ul>
              <li><div class="row"><i class="noexp"></i><i class="conn"></i><svg class="ti"><use href="#t-3d"/></svg><span>3D Components</span></div></li>
              <li><div class="row"><i class="noexp"></i><i class="conn"></i><svg class="ti"><use href="#t-model"/></svg><span>Model</span></div></li>
              <li><div class="row"><i class="noexp"></i><i class="conn"></i><svg class="ti"><use href="#t-circ"/></svg><span>Circuit Elements</span></div></li>
              <li><div class="row"><i class="exp p"></i><i class="conn"></i><svg class="ti"><use href="#t-bnd"/></svg><span>Boundaries</span></div></li>
              <li><div class="row"><i class="exp p"></i><i class="conn"></i><svg class="ti"><use href="#t-exc"/></svg><span>Excitations</span></div></li>
              <li><div class="row"><i class="noexp"></i><i class="conn"></i><svg class="ti"><use href="#t-mesh"/></svg><span>Mesh</span></div></li>
              <li><div class="row"><i class="exp p"></i><i class="conn"></i><svg class="ti"><use href="#t-ana"/></svg><span>Analysis</span></div></li>
              <li><div class="row"><i class="noexp"></i><i class="conn"></i><svg class="ti"><use href="#t-opt"/></svg><span>Optimetrics</span></div></li>
              <li><div class="row"><i class="exp m"></i><i class="conn"></i><svg class="ti"><use href="#t-res"/></svg><span>Results</span></div>
                <ul>
                  <li><div class="row"><i class="exp m"></i><i class="conn"></i><svg class="ti"><use href="#t-plot"/></svg><span>Z Parameter Plot 1</span></div>
                    <ul>
                      <li><div class="row"><i class="noexp"></i><i class="conn"></i><svg class="ti"><use href="#t-trace"/></svg><span>re(Z(1,1))</span></div></li>
                      <li><div class="row"><i class="noexp"></i><i class="conn"></i><svg class="ti"><use href="#t-trace"/></svg><span>im(Z(1,1))</span></div></li>
                    </ul>
                  </li>
                </ul>
              </li>
              <li><div class="row"><i class="exp p"></i><i class="conn"></i><svg class="ti"><use href="#t-port"/></svg><span>Port Field Display</span></div></li>
              <li><div class="row"><i class="noexp"></i><i class="conn"></i><svg class="ti"><use href="#t-over"/></svg><span class="soft">Field Overlays</span></div></li>
              <li><div class="row"><i class="noexp"></i><i class="conn"></i><svg class="ti"><use href="#t-rad"/></svg><span>Radiation</span></div></li>
            </ul>
          </li>
          <li><div class="row"><i class="exp p"></i><i class="conn"></i><svg class="ti"><use href="#t-fold"/></svg><span>Definitions</span></div></li>
        </ul>
      </div>
      <div class="hscroll pmscroll"><i class="arrow l"></i><i class="thumb"></i><i class="arrow r"></i></div>
    </div>
    <div class="hsplit"></div>
    <div class="dock props">
      <div class="dockhead"><span>Properties</span><svg class="pin"><use href="#pin"/></svg><svg class="close"><use href="#x"/></svg></div>
      <div class="propbody"></div>
    </div>
  </div>
  <div class="vsplit wide"></div>
  <div class="maincol">
    <div class="toprow">
      <div class="modeltree">
        <ul class="tree r20">
          <li><div class="row"><i class="exp m"></i><i class="conn"></i><svg class="ti"><use href="#t-model"/></svg><span>Model</span></div>
            <ul>
              <li><div class="row"><i class="exp m"></i><i class="conn"></i><svg class="ti"><use href="#t-solid"/></svg><span>Solids</span></div>
                <ul>
                  <li><div class="row"><i class="exp m"></i><i class="conn"></i><svg class="ti"><use href="#t-mat"/></svg><span>air</span></div>
                    <ul><li><div class="row"><i class="exp m"></i><i class="conn"></i><svg class="ti"><use href="#t-solid"/></svg><span>Box2</span></div>
                      <ul><li><div class="row"><i class="noexp"></i><i class="conn"></i><svg class="ti"><use href="#t-cbox"/></svg><span>CreateBox</span></div></li></ul>
                    </li></ul>
                  </li>
                  <li><div class="row"><i class="exp m"></i><i class="conn"></i><svg class="ti"><use href="#t-mat"/></svg><span>copper</span></div>
                    <ul><li><div class="row"><i class="exp m"></i><i class="conn"></i><svg class="ti"><use href="#t-solid"/></svg><span>Copper</span></div>
                      <ul><li><div class="row"><i class="noexp"></i><i class="conn"></i><svg class="ti"><use href="#t-imp"/></svg><span>Import</span></div></li></ul>
                    </li></ul>
                  </li>
                  <li><div class="row"><i class="exp m"></i><i class="conn"></i><svg class="ti"><use href="#t-mat"/></svg><span>FR4_epoxy</span></div>
                    <ul><li><div class="row"><i class="exp m"></i><i class="conn"></i><svg class="ti"><use href="#t-solid"/></svg><span>Box1</span></div>
                      <ul>
                        <li><div class="row"><i class="noexp"></i><i class="conn"></i><svg class="ti"><use href="#t-cbox"/></svg><span>CreateBox</span></div></li>
                        <li><div class="row"><i class="exp p"></i><i class="conn"></i><svg class="ti"><use href="#t-sub"/></svg><span>Subtract</span></div></li>
                      </ul>
                    </li></ul>
                  </li>
                </ul>
              </li>
              <li><div class="row"><i class="exp p"></i><i class="conn"></i><svg class="ti"><use href="#t-sheet"/></svg><span>Sheets</span></div></li>
            </ul>
          </li>
          <li><div class="row"><i class="exp p"></i><i class="conn"></i><svg class="ti"><use href="#t-cs"/></svg><span>Coordinate Systems</span></div></li>
          <li><div class="row"><i class="exp p"></i><i class="conn"></i><svg class="ti"><use href="#t-planes"/></svg><span>Planes</span></div></li>
          <li><div class="row"><i class="exp p"></i><i class="conn"></i><svg class="ti"><use href="#t-lists"/></svg><span>Lists</span></div></li>
        </ul>
      </div>
      <div class="viewport">
        <svg class="scene" viewBox="643 157 1120 699">
          <rect x="643" y="157" width="1120" height="699" fill="#f8f8f8"/>
          <rect x="643" y="157" width="1120" height="699" fill="url(#grid)"/>
          <path fill="#2a7f5d" d="M686 157H1555L1545 856H675z"/>
          <path stroke="#1c5a42" stroke-width="1.500" d="M686 157 675 856"/>
          <g transform="matrix(1 .0103 -.0162 1 1180 470)" fill="none">
            <use href="#coil" stroke="#bb4a1a" stroke-width="3.200"/>
            <use href="#coil" stroke="#ffddb5" stroke-width="1.800"/>
            <path d="M7-2h5v6H7z" fill="#ffddb5" stroke="#bb4a1a" stroke-width=".6"/>
          </g>
          <path fill="#ffddb5" stroke="#bb4a1a" d="M1157.500 682.500h32v34.500h-32z"/>
          <path fill="#ffddb5" stroke="#bb4a1a" d="M1183 682V669h2v13z"/>
          <circle cx="1184" cy="667" r="3" fill="#ffddb5" stroke="#bb4a1a" stroke-width=".7"/>
          <path fill="#830d0e" d="M1168 681h9v7h-1v29h-8z"/>
          <rect x="982.500" y="821.500" width="441" height="11" fill="#000" stroke="#000"/>
          <rect x="983" y="822" width="220" height="10" fill="#fff"/>
          <g class="sv-n" font-size="12" fill="#111" text-anchor="middle">
            <text x="980" y="848">0</text><text x="1201" y="848">20</text><text x="1421" y="848">40</text><text x="1447" y="848">(mm)</text>
          </g>
          <g class="sv-b" text-anchor="end" fill="#3c3c3c">
            <text x="1755" y="187" font-size="23.500">Ansys</text>
            <text x="1754" y="201" font-size="12.800">2023 R2</text>
            <text x="1755" y="218" font-size="12.500">STUDENT</text>
          </g>
          <path stroke="#3c3c3c" d="M1685 203.500h71"/>

          <path fill="#e01010" d="M716 737l2 8-1 15h-3l-1-15z"/>
          <text x="714" y="735" class="sv-n" font-size="15" fill="#d01010" text-anchor="middle">X</text>
          <ellipse cx="716" cy="782" rx="8" ry="19" fill="#e01010"/>
          <ellipse cx="716" cy="782" rx="19" ry="7" fill="#10a020"/>
          <path fill="#fff" stroke="#a8b8c8" d="M702.500 769.500h26v26h-26z"/>
          <circle cx="703" cy="770" r="2.500" fill="#999"/>
          <text x="714" y="793" class="sv-n" font-size="15" fill="#3058d8" text-anchor="middle">Z</text>
          <path stroke="#0c8a20" stroke-width="2" d="M670 782h23"/>
          <path fill="#0c8a20" d="M673 779h9v6h-9z"/>
          <text x="659" y="787" class="sv-n" font-size="14" fill="#0c8a20" text-anchor="middle">Y</text>

          <path stroke="#900" stroke-width="2" d="M1702 765v29"/>
          <path fill="#a01010" d="M1702 754l4 10h-8z"/>
          <text x="1706" y="749" class="sv-b" font-size="11" fill="#f01010" text-anchor="middle">X</text>
          <path stroke="#086808" stroke-width="2" d="M1670 793h32"/>
          <path fill="#189018" d="M1662 793l10-4v8z"/>
          <text x="1660" y="793" class="sv-b" font-size="11" fill="#0c8a20" text-anchor="middle">Y</text>
          <path fill="#1c3a88" d="M1702 790l4 4-4 5-4-5z"/>
          <text x="1707" y="797" class="sv-n" font-size="11" fill="#3058d8" text-anchor="middle">Z</text>
        </svg>
      </div>
      <div class="vsplit"></div>
      <div class="complib">
        <div class="dockhead"><span class="clip">Component Libra...</span><svg class="pin"><use href="#pin"/></svg><svg class="close"><use href="#x"/></svg></div>
        <div class="libbox">
          <div class="libtree">
            <ul class="tree r16">
              <li><div class="row"><i class="noexp"></i><i class="conn"></i><svg class="ti"><use href="#t-fav"/></svg><span class="soft">Favorites</span></div></li>
              <li><div class="row"><i class="noexp"></i><i class="conn"></i><svg class="ti"><use href="#t-fav"/></svg><span>Most Recently Used</span></div></li>
              <li><div class="row"><i class="exp m"></i><i class="conn"></i><svg class="ti"><use href="#t-3d"/></svg><span>HFSS Components</span></div>
                <ul>
                  <li><div class="row"><i class="exp p"></i><i class="conn"></i><svg class="ti"><use href="#t-yfold"/></svg><span>ADAS</span></div></li>
                  <li><div class="row"><i class="exp p"></i><i class="conn"></i><svg class="ti"><use href="#t-yfold"/></svg><span>Antennas</span></div></li>
                  <li><div class="row"><i class="exp p"></i><i class="conn"></i><svg class="ti"><use href="#t-yfold"/></svg><span>EMI EMC</span></div></li>
                  <li><div class="row"><i class="exp p"></i><i class="conn"></i><svg class="ti"><use href="#t-gfold"/></svg><span>HIROSE RF CONN</span></div></li>
                  <li><div class="row"><i class="exp p"></i><i class="conn"></i><svg class="ti"><use href="#t-yfold"/></svg><span>Human Body Ex</span></div></li>
                  <li><div class="row"><i class="exp p"></i><i class="conn"></i><svg class="ti"><use href="#t-gfold"/></svg><span>Johanson</span></div></li>
                  <li><div class="row"><i class="exp p"></i><i class="conn"></i><svg class="ti"><use href="#t-gfold"/></svg><span>Kyocera AVX An</span></div></li>
                  <li><div class="row"><i class="exp p"></i><i class="conn"></i><svg class="ti"><use href="#t-gfold"/></svg><span>Modelithics 3D M</span></div></li>
                  <li><div class="row"><i class="exp p"></i><i class="conn"></i><svg class="ti"><use href="#t-yfold"/></svg><span>Molex Antenna P</span></div></li>
                  <li><div class="row"><i class="exp p"></i><i class="conn"></i><svg class="ti"><use href="#t-gfold"/></svg><span>Molex RF Micro</span></div></li>
                  <li><div class="row"><i class="exp p"></i><i class="conn"></i><svg class="ti"><use href="#t-yfold"/></svg><span>Rectangular Wa</span></div></li>
                  <li><div class="row"><i class="exp p"></i><i class="conn"></i><svg class="ti"><use href="#t-gfold"/></svg><span>Rosenberger</span></div></li>
                  <li><div class="row"><i class="exp p"></i><i class="conn"></i><svg class="ti"><use href="#t-gfold"/></svg><span>Samtec Connec</span></div></li>
                  <li><div class="row"><i class="exp p"></i><i class="conn"></i><svg class="ti"><use href="#t-yfold"/></svg><span>Surface Mount P</span></div></li>
                  <li><div class="row"><i class="exp p"></i><i class="conn"></i><svg class="ti"><use href="#t-yfold"/></svg><span>TDK</span></div></li>
                  <li><div class="row"><i class="exp p"></i><i class="conn"></i><svg class="ti"><use href="#t-gfold"/></svg><span>Wurth Elektronik</span></div></li>
                </ul>
              </li>
            </ul>
          </div>
          <div class="hscroll libscroll"><i class="arrow l"></i><i class="thumb"></i><i class="arrow r"></i></div>
        </div>
        <div class="libtab">Components</div>
      </div>
    </div>
    <div class="hsplit"></div>
    <div class="bottomrow">
      <div class="msgdock">
        <div class="dockhead tall"><span>Message Manager</span><svg class="pin"><use href="#pin"/></svg><svg class="close"><use href="#x"/></svg></div>
        <div class="msgbody">
          <div class="mrow"><i class="exp m"></i><i class="conn"></i><svg class="ti"><use href="#t-proj"/></svg><span class="sel">ANT1_NFC_v16 (D:/facultate/LICENTA/CAD/version_1/antenna_simulation/)</span></div>
          <div class="mrow lv1"><i class="exp m"></i><i class="conn"></i><svg class="ti"><use href="#t-hfss"/></svg><span class="lv1text">HFSSDesign1 (Terminal Network)</span></div>
          <div class="mrow lv2"><i class="hook"></i><svg class="ti"><use href="#t-find"/></svg><svg class="ti"><use href="#t-info"/></svg><span class="mtext">Cleaned up history of parts: Copper,  (04:12:37 PM  Nov 16, 2023)</span></div>
          <div class="mrow lv2"><i class="hook"></i><i class="gapi"></i><svg class="ti"><use href="#t-info"/></svg><span class="mtext">An interpolating frequency sweep with 2001 points has been started using HFSS - Solving Distributed. (04:16:01 PM  Nov 16, 2023)</span></div>
          <div class="mrow lv2"><i class="hook"></i><i class="gapi"></i><svg class="ti"><use href="#t-info"/></svg><span class="mtext">Interpolating frequency sweep complete. Converged. (04:16:01 PM  Nov 16, 2023)</span></div>
          <div class="mrow lv2"><i class="hook"></i><i class="gapi"></i><svg class="ti"><use href="#t-info"/></svg><span class="mtext">Normal completion of simulation on server: Local Machine. (04:16:01 PM  Nov 16, 2023)</span></div>
        </div>
      </div>
      <div class="vsplit thin"></div>
      <div class="progdock">
        <div class="dockhead tall"><span>Progress</span><svg class="pin"><use href="#pin"/></svg><svg class="close"><use href="#x"/></svg></div>
        <div class="progbody"></div>
      </div>
    </div>
  </div>
</div>

<div class="statusbar">
  <span class="status-text">Nothing is selected</span>
  <span class="statbtn msgbtn"><svg class="ti"><use href="#t-info"/></svg><span>Hide 4 Messages</span></span>
  <span class="statbtn progbtn"><svg class="minibar" viewBox="0 0 16 8"><path fill="#ddd" d="M0 0h16v8H0z"/><path fill="#18d828" d="M0 0h9v4H0z"/></svg><span>Hide Progress</span></span>
</div>

<div class="taskbar">
  <svg class="winlogo" viewBox="0 0 17 16"><path fill="#fff" d="M0 2.300 7 1.300V7.500H0zM8 1.100 17 0V7.500H8zM0 8.500H7V14.700L0 13.700zM8 8.500H17V16L8 14.900z"/></svg>
  <div class="searchbox">
    <svg class="searchicon" viewBox="0 0 20 20"><circle cx="12" cy="8" r="6.500" fill="none" stroke="#222" stroke-width="1.400"/><path stroke="#222" stroke-width="1.600" d="M7.500 12.500 1 19"/></svg>
    <span class="searchtext">Type here to search</span>
    <svg class="searchart" viewBox="0 0 86 43"><path fill="#d8ae80" d="M0 43 14 33H86V43z"/><path fill="#6a9c50" d="M14 14 40 9 43 34 19 38z"/><path fill="#fff" d="M16 14 28 12 30 35 20 36zM29 12 39 10 41 32 31 34z"/><path stroke="#f09028" stroke-width="3" d="M29 24 43 6"/><path fill="#f04848" d="M41 4l4-2 1 4-3 1z"/><path fill="#1a78e8" d="M52 20c0-8 4-14 7-14s9 6 9 14v18c0 3-16 3-16 0z"/><path fill="#4aa0f8" d="M55 27c0-8 10-8 10 0v10H55z"/><path fill="#9b70f0" d="M56 34h8v3h-8z"/></svg>
  </div>
  <svg class="taskview" viewBox="0 0 20 26"><path fill="none" stroke="#fff" stroke-width="1.200" d="M1 7h12v12H1zM1 3.500h12M1 22.500h12"/><path fill="#fff" d="M17 3h1.500v3H17zM17 11h1.500v5H17zM17 20h1.500v3H17z"/></svg>
  <div class="taskapp"><svg class="appic" viewBox="0 0 26 26"><path fill="#e8b828" d="M1 3h9l2 2h13v18H1z"/><path fill="#fbd75b" d="M1 8h24v15H1z"/><path fill="#2a8ad8" d="M7 16h12v7H7z"/><path fill="#1a5a9a" d="M10 16h6v4h-6z"/></svg></div>
  <div class="taskapp"><svg class="appic" viewBox="0 0 26 26"><path fill="#0f7ac2" d="M13 0c8 0 13 5 13 12 0 4-3 6-7 6-3 0-5-2-4-4 1-3-4-6-8-3C4 14 5 20 10 24 3 23 0 17 0 12 0 5 6 0 13 0z"/><path fill="#4ecb60" d="M3 5C6 1 11 0 15 1c6 1 11 5 11 11 0 3-2 5-5 5-3 1-5-1-5-3 0-5-7-9-13-9z"/><path fill="#0a4f9c" d="M10 24c-5-3-6-10-3-13-3 5 1 10 7 10 3 0 7-1 10-4-2 5-8 9-14 7z"/></svg></div>
  <div class="taskapp"><svg class="appic hexapp" viewBox="0 0 20 26"><path fill="none" stroke="#d6c596" stroke-width="3.400" d="M9 2 17 7V17L11 14M11 24 3 19V9L9 12"/></svg></div>
  <div class="taskapp edt"><svg class="edtic" viewBox="0 0 28 27"><path fill="#0a0a0a" d="M0 0h28v27H0z"/><g fill="none" stroke="#d89020" stroke-width="2"><path d="M5 2C1 7 1 13 5 18M23 2c4 5 4 11 0 16"/><path d="M9 4c-3 4-3 8 0 12M19 4c3 4 3 8 0 12"/></g><circle cx="14" cy="10" r="3" fill="#d89020"/><text x="14" y="26" class="sv-b" font-size="9" fill="#fff" text-anchor="middle">EDT</text></svg></div>
  <div class="tray">
    <svg class="trayic chev" viewBox="0 0 13 8"><path fill="none" stroke="#fff" stroke-width="1.200" d="M1 7 6.500 1 12 7"/></svg>
    <svg class="trayic spk" viewBox="0 0 18 16"><path fill="none" stroke="#fff" d="M1 5h3l4-4v14l-4-4H1zM11 5c1 2 1 4 0 6M14 3c2 3 2 7 0 10"/></svg>
    <svg class="trayic bat" viewBox="0 0 20 14"><path fill="none" stroke="#fff" d="M1 3.500h16v8H1z"/><path fill="#fff" d="M18 6h2v3h-2zM3 5h10v5H3zM2 0h1v3H2zM6 0h1v3H6z"/></svg>
    <span class="lang">ROU</span>
    <span class="clock"><span>4:24 PM</span><span>16-Nov-23</span></span>
    <svg class="trayic note" viewBox="0 0 17 17"><path fill="none" stroke="#fff" stroke-width="1.200" d="M1 1h15v12h-5l-3 3-3-3H1z"/></svg>
    <i class="showdesk"></i>
  </div>
</div>
</body>
</html>
```
FILE: styles.css
```css
*{box-sizing:border-box}
html,body{margin:0;padding:0}
body{width:1919px;height:1080px;overflow:hidden;display:flex;flex-direction:column;font:12px/1.2 "Open Sans","Liberation Sans",sans-serif;color:#111;background:#f0f0f0}
i{display:block;font-style:normal}
svg{display:block;flex:none}
.defs{position:absolute}
.sv-b{font-family:"Liberation Sans",sans-serif;font-weight:700}
.sv-n{font-family:"Open Sans",sans-serif}
.sv-i{font-family:"Liberation Serif",serif;font-style:italic}

/* title + menu */
.titlebar{flex:none;height:24px;display:flex;align-items:center;background:#fff linear-gradient(to right,transparent 827px,#0078d7 827px,#0078d7 880px,#e8e8e8 880px,#e8e8e8 1093px,transparent 1093px) no-repeat 0 0/100% 1px;padding-left:2px}
.appicon{width:15px;height:15px}
.title-text{margin-left:6px;padding-top:2px;font-size:12.800px;color:#8a8a8a;white-space:nowrap}
.winbtns{margin-left:auto;display:flex;padding-right:0}
.winbtn{width:48px;height:24px;display:flex;align-items:center;justify-content:center}
.wmin{width:11px;border-top:1px solid #888}
.menubar{flex:none;height:21px;display:flex;align-items:center;background:#fff;padding-left:7px}
.menuicon{width:15px;height:12px;margin:1px 2px 0 0}
.menu{padding:3px 6.800px 0;font-size:12.500px;color:#444}
.mdibtns{margin-left:auto;display:flex;gap:1px;align-self:flex-end}
.mdibtn{width:20px;height:19px;background:#eeeef0;display:flex;align-items:center;justify-content:center}
.mmin{width:6px;height:2px;background:#888;margin-top:6px}

/* ribbon */
.ribbon{flex:none;height:85px;background:#eeeef2;border-top:2px solid #d6d8e2;border-bottom:2px solid #cfd2dc;display:flex;align-items:stretch;font-size:11.800px}
.sep{flex:none;width:1px;margin:3px 0 1px;background:#cdd0da}
.sep.d{margin:10px 0 7px;background:#55606c}
.group{flex:none;display:grid;grid-auto-flow:column;grid-template-rows:repeat(3,24px);align-content:start;justify-content:start;padding-top:5px}
.tool{display:flex;align-items:center;gap:3px;height:24px;white-space:nowrap;color:#222}
.tool>span{margin-top:-1px}
.tool.off{color:#8c8c8c}
.tool.off svg{opacity:.75}
.ic{width:17px;height:18px}
.ic18{width:18px;height:18px;align-self:center;justify-self:center}
.ic18.dim{opacity:.7}
.ic30{width:30px;height:30px}
.ic32{width:32px;height:32px}
.caret{width:0;height:0;margin-left:3px;margin-top:-2px;border:4px solid transparent;border-top:5px solid #777;border-bottom:0}
.bigtool{grid-row:span 3;display:flex;flex-direction:column;align-items:center;padding-top:5px;gap:7px;color:#222}
.combo{display:flex;align-items:center;justify-content:space-between;background:#fff;border:1px solid #d6d8e2;padding:0 6px 0 2px;white-space:nowrap;color:#222}
.combo::after{content:"";width:0;height:0;border:4px solid transparent;border-top:5px solid #777;border-bottom:0}
.hl{background:#c8c8c8}
.g1{width:175px;padding-left:5px;grid-template-columns:52px 56px 60px}
.g2{width:130px;padding-left:8px;grid-template-columns:auto}
.selrow{display:flex;align-items:center;gap:4px;height:24px;color:#222}
.selcombo{width:81px;height:22px}
.g3{width:66px;padding-left:9px;grid-template-columns:28px 28px;grid-template-rows:repeat(3,24px)}
.g4{width:127px;grid-template-columns:55px 70px}
.zoomtool{gap:4px}
.zoomtool .caret{margin:6px 0 0}
.g5{width:98px;padding-left:11px;grid-template-columns:auto}
.g6{width:92px;padding-left:8px;grid-template-columns:28px 28px 28px}
.g7{width:63px;padding-left:8px;grid-template-columns:28px 28px}
.g8{width:63px;padding-left:8px;grid-template-columns:28px 28px}
.g9{width:65px;padding-left:9px;grid-template-columns:28px 28px}
.g10{width:70px;padding-left:10px;grid-template-columns:auto}
.g11{width:100px;padding-left:9px;grid-template-columns:auto}
.g12{width:147px;padding-left:9px;grid-template-columns:73px 60px}
.g13{width:35px;padding-left:8px;grid-template-columns:18px}
.g14{width:81px;padding-left:9px;grid-template-columns:auto}
.g15{width:84px;padding-left:9px;grid-template-columns:auto}
.g16{width:106px;padding-left:9px;grid-template-columns:auto}
.g17{width:93px;padding-left:5px;grid-template-columns:auto;justify-items:start}
.pad{padding:0 4px}
.units{color:#222}
.g18{width:82px;padding-left:6px;grid-template-columns:auto;justify-items:start}
.pad2{padding:0 8px 0 2px}
.xycombo{width:70px;height:21px;margin-left:1px;align-self:center}
.g19{width:66px;padding-left:5px;grid-template-columns:29px 28px}
.cell{display:flex;align-items:center;justify-content:center;height:24px}
.g20{width:99px;padding-left:7px;grid-template-columns:auto;justify-items:start}
.matcombo{width:87px;height:22px;align-self:center}

/* tabs */
.tabs{flex:none;height:22px;background:#f0f0f0;display:flex;align-items:stretch;padding-left:2px;font-size:11.400px}
.tab{padding:0 13.500px;display:flex;align-items:center;color:#222;white-space:nowrap;border:1px solid transparent;border-top:0}
.tab.active{padding:0 12.500px;color:#1a5a96;background:#f8f8f8;border-color:#cfd2dc}
.ansysmark{width:17px;height:16px;margin:4px 4px 0 auto}

/* workspace */
.workspace{flex:1;min-height:0;display:flex;padding-top:3px}
.leftcol{width:247px;flex:none;display:flex;flex-direction:column}
.vsplit{flex:none;width:6px;background:repeating-conic-gradient(#7c7c7c 0 25%,#c4c4c4 0 50%) 0 0/3px 3px}
.vsplit.wide{width:8px}
.vsplit.thin{width:4px}
.hsplit{flex:none;height:6px;background:repeating-conic-gradient(#7c7c7c 0 25%,#c4c4c4 0 50%) 0 0/3px 3px}
.dock{display:flex;flex-direction:column;background:#f0f0f0}
.pm{height:428px}
.props{flex:1;min-height:0}
.dockhead{flex:none;height:24px;display:flex;align-items:center;padding:2px 6px 0 3px;background:linear-gradient(#dfe2e6,#c4c8cc);border-bottom:1px solid #a8acb0;color:#222;white-space:nowrap}
.dockhead.tall{height:25px;padding-top:0}
.dockhead>span{flex:1}
.dockhead svg{margin-top:-2px}
.clip{overflow:hidden}
.pin{width:10px;height:12px;margin-right:10px}
.close{width:10px;height:10px}
.pmbody{flex:1;min-height:0;background:#fff;overflow:hidden;padding-top:2px;font-size:11.300px}
.rootrow{display:flex;align-items:center;height:18px;gap:1px}
.rootrow b{font-weight:700;margin-left:1px;font-size:12.800px}
.row b{font-size:12.200px}
.rootlist{margin-left:-1px}
.hscroll{flex:none;height:18px;background:#f0f0f0;display:flex;align-items:center}
.pmscroll{padding:0 5px}
.pmscroll .thumb{margin-left:26px;width:189px;height:100%;background:#cdcdcd}
.arrow{width:6px;height:6px;border-left:2px solid #555;border-bottom:2px solid #555;transform:rotate(45deg);flex:none}
.arrow.r{transform:rotate(225deg);margin-left:auto}
.propbody{flex:1;margin:4px 4px 6px 0;background:#f0f0f0;border-right:2px solid #a8a8a8;border-bottom:2px solid #a8a8a8}

.maincol{flex:1;min-width:0;display:flex;flex-direction:column}
.toprow{height:701px;flex:none;display:flex}
.modeltree{width:388px;flex:none;background:#fff;border-top:2px solid #707070;padding:1px 0 0 3px;overflow:hidden;font-size:12.300px}
.viewport{flex:none;width:1121px;border-top:2px solid #707070;border-left:1px solid #8a8a8a;background:#f8f8f8;overflow:hidden}
.scene{width:1120px;height:699px}
.complib{flex:1;min-width:0;display:flex;flex-direction:column;background:#f0f0f0}
.complib .dockhead{height:23px}
.libbox{margin:7px 5px 0 6px;height:647px;flex:none;border-right:2px solid #a0a0a0;border-bottom:2px solid #a0a0a0;display:flex;flex-direction:column;padding-left:1px}
.libtree{flex:1;min-height:0;background:#fff;overflow:hidden;padding:3px 0 0 4px;margin-right:1px;font-size:11px}
.libscroll{height:17px;padding:0 4px 0 5px}
.libscroll .thumb{margin-left:8px;width:61px;height:100%;background:#cdcdcd}
.libtab{width:72px;height:18px;margin-left:6px;background:#f0f0f0;border-right:2px solid #888;border-bottom:2px solid #888;padding:1px 0 0 2px;line-height:16px;white-space:nowrap;font-size:11px;color:#112;overflow:hidden}
.bottomrow{flex:1;min-height:0;display:flex}
.msgdock{width:833px;flex:none;display:flex;flex-direction:column}
.progdock{flex:1;display:flex;flex-direction:column}
.msgbody,.progbody{flex:1;background:#fff;overflow:hidden}
.msgbody{font:10.600px/16px "Liberation Sans",sans-serif;padding-left:2px}

/* trees */
.tree,.tree ul{list-style:none;margin:0;padding:0}
.tree ul{padding-left:19px}
.tree li{position:relative}
.tree li::before{content:"";position:absolute;left:5px;top:0;bottom:0;border-left:1px dotted #808080}
.tree li:last-child::before{bottom:auto;height:9px}
.row{display:flex;align-items:center;white-space:nowrap;color:#112}
.r18 .row{height:18px}
.r20 .row{height:20px}
.r16 .row{height:16px}
.row b{font-weight:700}
.ti{width:16px;height:16px;flex:none}
.row .ti{margin-right:4px}
.exp,.mrow .exp{width:11px;height:11px;flex:none;border:1px solid #808080;background:#fff;position:relative;z-index:1}
.exp::before{content:"";position:absolute;left:1px;right:1px;top:4px;height:1px;background:#000}
.exp.p::after{content:"";position:absolute;top:1px;bottom:1px;left:4px;width:1px;background:#000}
.noexp{width:11px;flex:none;position:relative;height:1px;border-top:1px dotted #808080;clip-path:inset(-1px 0 -1px 5px)}
.conn{width:6px;flex:none;border-top:1px dotted #808080}
.soft{background:#f0f0f0;padding:0 1px;margin-left:-1px}
.mrow{display:flex;align-items:center;height:16px;white-space:nowrap;color:#111}
.mrow .ti{margin-right:3px}
.mtext{white-space:pre;margin-left:2px}
.sel{background:#0078d7;color:#fff;padding:0 2px;margin-left:1px;font-size:11px}
.lv1{padding-left:18px;position:relative}
.lv1::before{content:"";position:absolute;left:23px;top:-8px;height:10px;border-left:1px dotted #808080}
.lv1text{margin-left:4px;font-size:11px}
.lv2{padding-left:45px;position:relative}
.lv2::before{content:"";position:absolute;left:45px;top:-8px;height:16px;border-left:1px dotted #808080}
.hook{width:11px;flex:none;border-top:1px dotted #808080}
.gapi{width:16px;flex:none;margin-right:3px}

/* status */
.statusbar{flex:none;height:25px;background:#ccd3da;display:flex;align-items:center;padding:3px 1px 0 4px;gap:4px}
.status-text{margin-right:auto;color:#111}
.statbtn{height:21px;display:flex;align-items:center;background:#cbe4f7;border:1px solid #15598f;color:#111;white-space:nowrap;font-size:11.300px}
.msgbtn{width:117px;padding-left:6px;gap:3px}
.progbtn{width:105px;padding-left:5px;gap:7px}
.minibar{width:16px;height:8px}

/* taskbar */
.taskbar{flex:none;height:43px;background:#1f2d36;display:flex;align-items:center}
.winlogo{width:17px;height:16px;margin-left:17px}
.searchbox{width:316px;height:43px;margin-left:20px;background:#f2f2f2;display:flex;align-items:center;overflow:hidden}
.searchicon{width:20px;height:20px;margin-left:14px}
.searchtext{margin-left:13px;font-size:16px;color:#222;white-space:nowrap}
.searchart{width:86px;height:43px;margin-left:auto}
.taskview{width:20px;height:26px;margin-left:17px}
.taskapp{width:46px;height:43px;display:flex;align-items:center;justify-content:center;border-bottom:2px solid #76b9ed;flex:none;margin-left:7px}
.taskview+.taskapp{margin-left:25px}
.appic{width:26px;height:26px}
.hexapp{width:20px}
.edtic{width:28px;height:27px}
.tray{margin-left:auto;display:flex;align-items:center;height:100%;color:#fff;padding-right:5px}
.trayic{flex:none}
.chev{width:13px;height:8px}
.spk{width:18px;height:16px;margin-left:7px}
.bat{width:20px;height:14px;margin-left:4px}
.lang{margin-left:25px;font-size:13.500px}
.clock{margin-left:8px;width:70px;display:flex;flex-direction:column;align-items:center;gap:4px;font-size:13.800px;line-height:16px}
.note{width:17px;height:17px;margin-left:18px}
.showdesk{width:1px;height:100%;background:#556;margin-left:20px}
```
